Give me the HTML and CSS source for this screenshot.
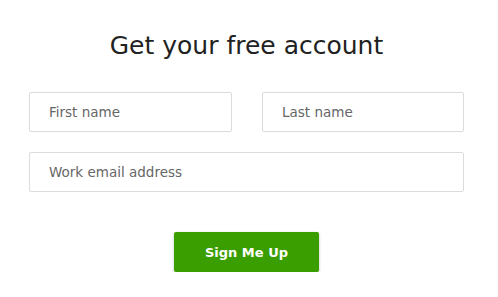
FILE: index.html
```html
<!DOCTYPE html>
<html>
<head>
<meta charset="utf-8">
<link rel="stylesheet" href="styles.css">
</head>
<body>
<form class="signup">
  <h1 class="title">Get your free account</h1>
  <div class="row two">
    <input class="field" type="text" placeholder="First name">
    <input class="field" type="text" placeholder="Last name">
  </div>
  <div class="row">
    <input class="field" type="email" placeholder="Work email address">
  </div>
  <div class="actions">
    <button class="btn" type="button">Sign Me Up</button>
  </div>
</form>
</body>
</html>
```

FILE: styles.css
```css
html, body {
  margin: 0;
  padding: 0;
  background: #ffffff;
}
body {
  font-family: "DejaVu Sans", "Open Sans", sans-serif;
}
.signup {
  width: 435px;
  margin: 0 0 0 29px;
  padding-top: 30px;
  display: flex;
  flex-direction: column;
}
.title {
  margin: 0 0 30px 0;
  height: 32px;
  line-height: 32px;
  font-size: 25px;
  font-weight: 400;
  color: #222222;
  text-align: center;
}
.row {
  display: grid;
  grid-template-columns: 1fr;
  margin-bottom: 20px;
}
.row.two {
  grid-template-columns: 203px 202px;
  column-gap: 30px;
}
.field {
  box-sizing: border-box;
  height: 40px;
  width: 100%;
  border: 1px solid #dcdcdc;
  border-radius: 2px;
  padding: 0 19px;
  font-family: "DejaVu Sans", "Open Sans", sans-serif;
  font-size: 13.5px;
  color: #555;
  background: #fff;
  outline: none;
}
.field::placeholder {
  color: #666666;
}
.actions {
  display: flex;
  justify-content: center;
  padding-top: 20px;
}
.btn {
  width: 145px;
  height: 40px;
  border: none;
  border-radius: 2px;
  background: #3b9e00;
  color: #ffffff;
  font-family: "DejaVu Sans", "Open Sans", sans-serif;
  font-weight: 700;
  font-size: 13px;
  box-shadow: 0 1px 3px rgba(0,0,0,0.25);
  cursor: pointer;
}
```
